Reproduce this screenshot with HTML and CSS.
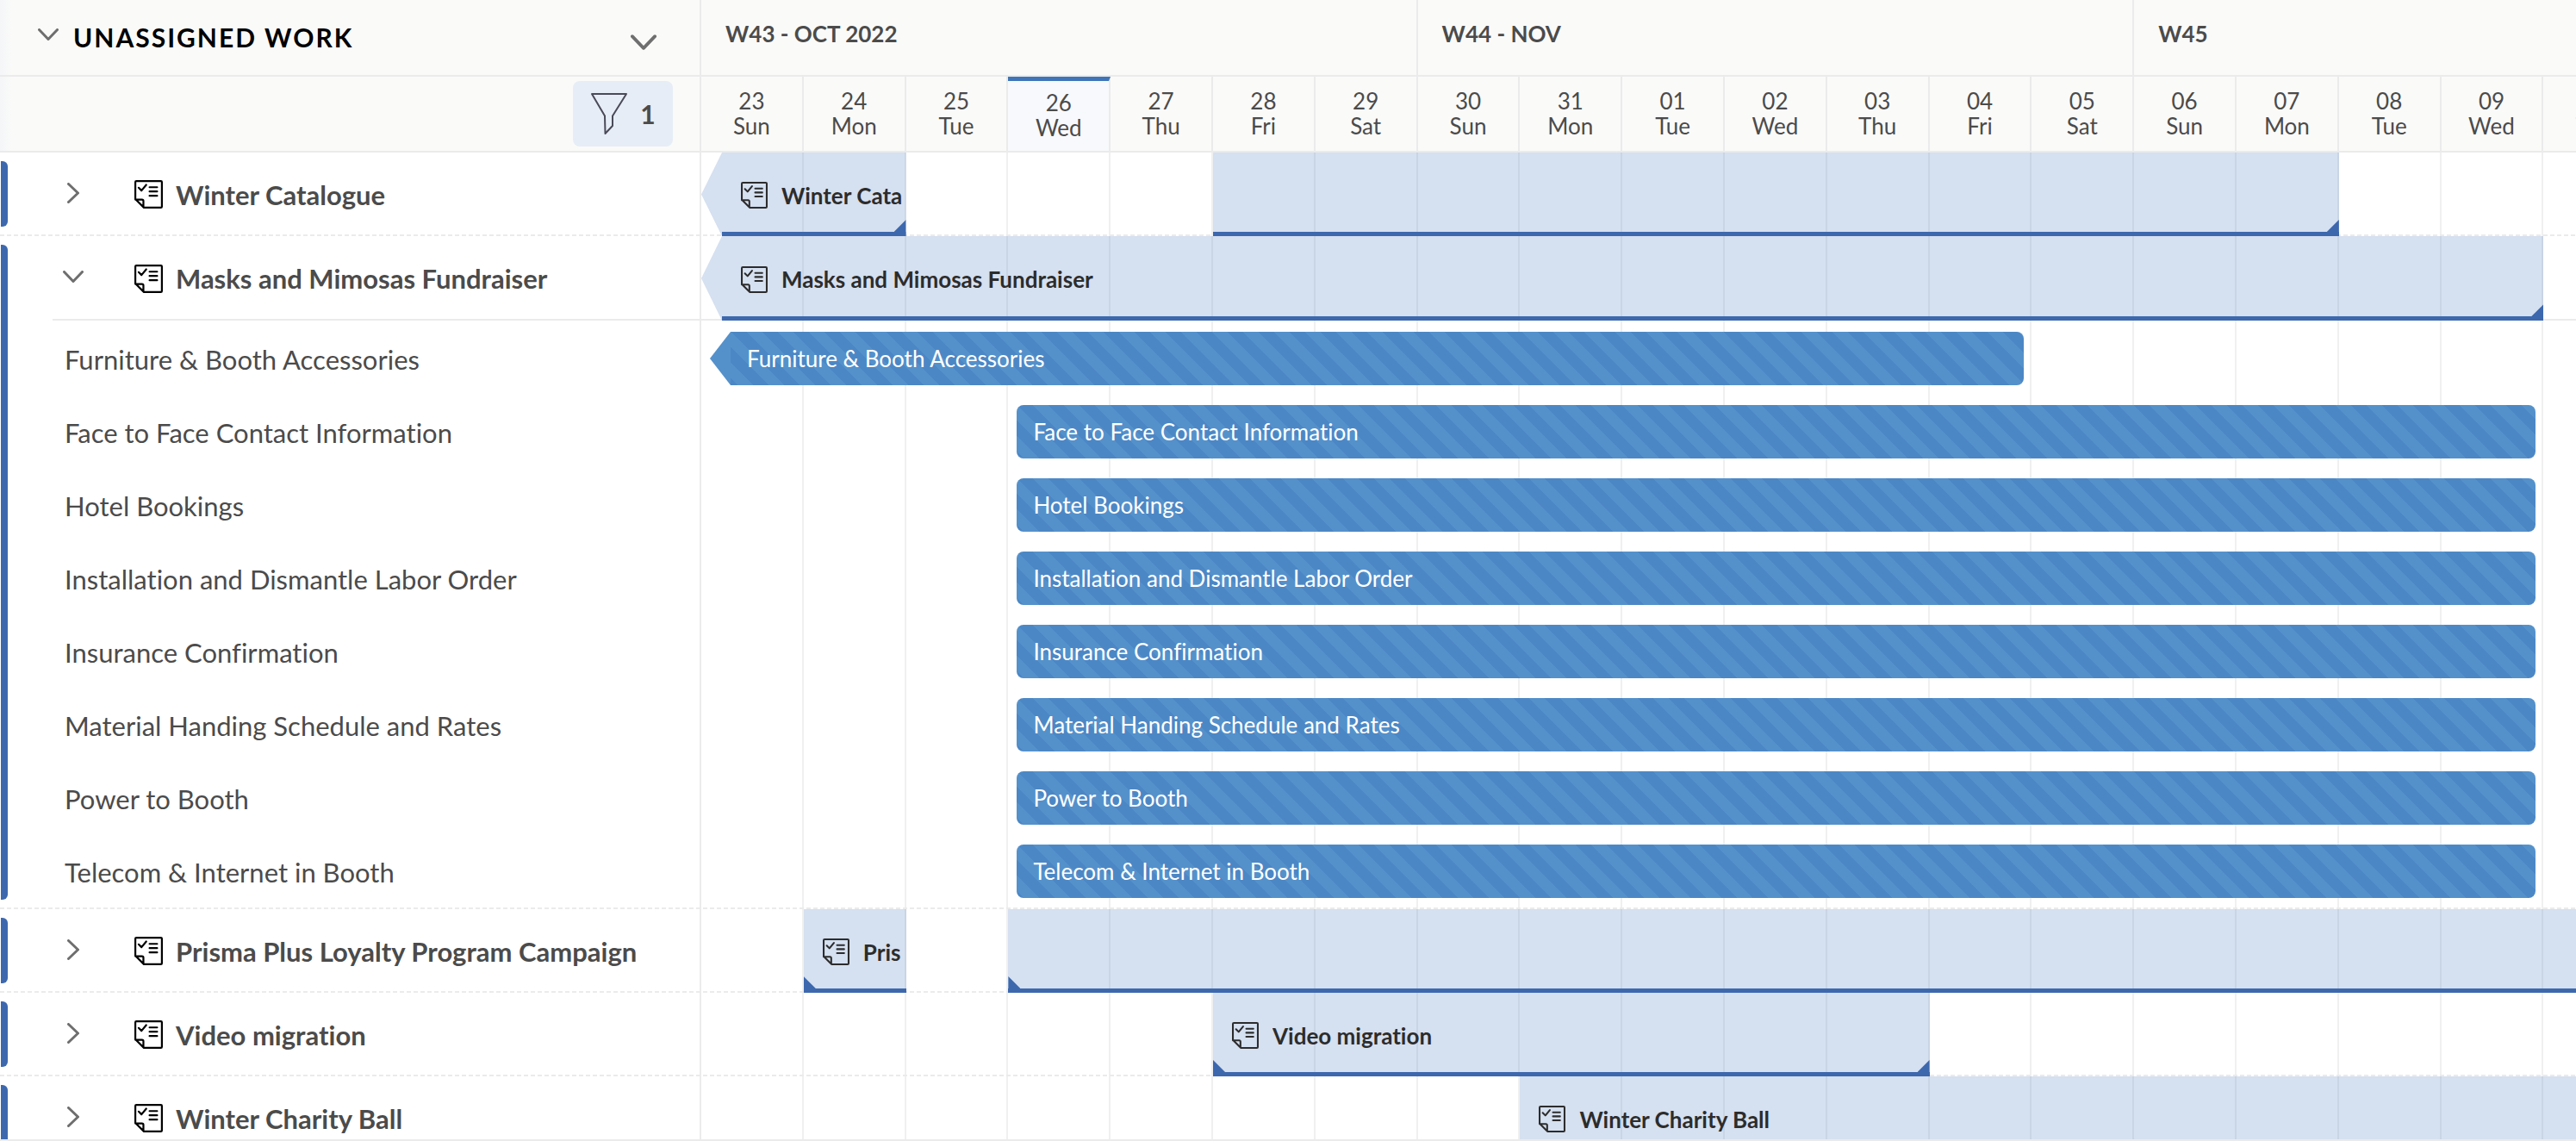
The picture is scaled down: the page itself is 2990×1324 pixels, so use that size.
FILE: index.html
```html
<!DOCTYPE html>
<html lang="en">
<head>
<meta charset="utf-8">
<title>Unassigned work</title>
<link rel="stylesheet" href="styles.css">
</head>
<body>
<svg class="sprite" aria-hidden="true">
  <symbol id="project" viewBox="0 0 30 30">
    <path d="M2 1H28a1 1 0 0 1 1 1V28a1 1 0 0 1-1 1H10L1 20V2a1 1 0 0 1 1-1ZM1 20.500H8a1.500 1.500 0 0 1 1.500 1.500V28.500M4.500 8l3 3 5-6M16 7.500h8M16 12h8M16 16.500h8"/>
  </symbol>
  <symbol id="down" viewBox="0 0 24 14"><path d="M1.500 1.500L12 12.500L22.500 1.500"/></symbol>
  <symbol id="right" viewBox="0 0 14 24"><path d="M1.500 1.500L12.500 12L1.500 22.500"/></symbol>
  <symbol id="funnel" viewBox="0 0 44 50"><path d="M2 2H42L26 27.500V39L17.500 48L17 27.500Z"/></symbol>
</svg>

<main class="board">
  <header class="line head">
    <div class="side title">
      <button class="toggle" aria-label="Collapse unassigned work"><svg class="down"><use href="#down"/></svg></button>
      <h1>UNASSIGNED WORK</h1>
      <button class="more" aria-label="More"><svg class="down big"><use href="#down"/></svg></button>
    </div>
    <div class="track weeks">
      <div class="week">W43 - OCT 2022</div>
      <div class="week">W44 - NOV</div>
      <div class="week last">W45</div>
    </div>
  </header>
  <div class="line head">
    <div class="side tools">
      <button class="filter" aria-label="Filters, 1 applied"><svg><use href="#funnel"/></svg>1</button>
    </div>
    <div class="track days">
      <div class="day">23<br>Sun</div><div class="day">24<br>Mon</div><div class="day">25<br>Tue</div>
      <div class="day today">26<br>Wed</div><div class="day">27<br>Thu</div><div class="day">28<br>Fri</div>
      <div class="day">29<br>Sat</div><div class="day">30<br>Sun</div><div class="day">31<br>Mon</div>
      <div class="day">01<br>Tue</div><div class="day">02<br>Wed</div><div class="day">03<br>Thu</div>
      <div class="day">04<br>Fri</div><div class="day">05<br>Sat</div><div class="day">06<br>Sun</div>
      <div class="day">07<br>Mon</div><div class="day">08<br>Tue</div><div class="day">09<br>Wed</div>
      <div class="day cut"><span>10<br>Thu</span></div>
    </div>
  </div>

  <div class="body">
    <div class="line columns" aria-hidden="true">
      <div class="side"></div>
      <div class="track">
        <i></i><i></i><i></i><i></i><i></i><i></i><i></i><i></i><i></i><i></i><i></i><i></i><i></i><i></i><i></i><i></i><i></i><i></i>
      </div>
    </div>

    <section class="group">
      <div class="line project">
        <div class="side">
          <button class="toggle" aria-label="Expand"><svg class="right"><use href="#right"/></svg></button>
          <svg class="icon"><use href="#project"/></svg><h2>Winter Catalogue</h2>
        </div>
        <div class="track">
          <div class="span before ends" style="grid-column:1/3"><svg class="icon"><use href="#project"/></svg><b>Winter Catalogue</b></div>
          <div class="span ends" style="grid-column:6/17"></div>
        </div>
      </div>
    </section>

    <section class="group">
      <div class="line project open">
        <div class="side">
          <button class="toggle" aria-label="Collapse"><svg class="down"><use href="#down"/></svg></button>
          <svg class="icon"><use href="#project"/></svg><h2>Masks and Mimosas Fundraiser</h2>
        </div>
        <div class="track">
          <div class="span before ends" style="grid-column:1/19"><svg class="icon"><use href="#project"/></svg><b>Masks and Mimosas Fundraiser</b></div>
        </div>
      </div>
      <div class="tasks">
        <div class="line task"><div class="side">Furniture &amp; Booth Accessories</div><div class="track"><div class="bar before" style="grid-column:1/14">Furniture &amp; Booth Accessories</div></div></div>
        <div class="line task"><div class="side">Face to Face Contact Information</div><div class="track"><div class="bar" style="grid-column:4/19">Face to Face Contact Information</div></div></div>
        <div class="line task"><div class="side">Hotel Bookings</div><div class="track"><div class="bar" style="grid-column:4/19">Hotel Bookings</div></div></div>
        <div class="line task"><div class="side">Installation and Dismantle Labor Order</div><div class="track"><div class="bar" style="grid-column:4/19">Installation and Dismantle Labor Order</div></div></div>
        <div class="line task"><div class="side">Insurance Confirmation</div><div class="track"><div class="bar" style="grid-column:4/19">Insurance Confirmation</div></div></div>
        <div class="line task"><div class="side">Material Handing Schedule and Rates</div><div class="track"><div class="bar" style="grid-column:4/19">Material Handing Schedule and Rates</div></div></div>
        <div class="line task"><div class="side">Power to Booth</div><div class="track"><div class="bar" style="grid-column:4/19">Power to Booth</div></div></div>
        <div class="line task"><div class="side">Telecom &amp; Internet in Booth</div><div class="track"><div class="bar" style="grid-column:4/19">Telecom &amp; Internet in Booth</div></div></div>
      </div>
    </section>

    <section class="group">
      <div class="line project">
        <div class="side">
          <button class="toggle" aria-label="Expand"><svg class="right"><use href="#right"/></svg></button>
          <svg class="icon"><use href="#project"/></svg><h2>Prisma Plus Loyalty Program Campaign</h2>
        </div>
        <div class="track">
          <div class="span starts" style="grid-column:2/3"><svg class="icon"><use href="#project"/></svg><b>Prisma Plus Loyalty Program Campaign</b></div>
          <div class="span starts" style="grid-column:4/20"></div>
        </div>
      </div>
    </section>

    <section class="group">
      <div class="line project">
        <div class="side">
          <button class="toggle" aria-label="Expand"><svg class="right"><use href="#right"/></svg></button>
          <svg class="icon"><use href="#project"/></svg><h2>Video migration</h2>
        </div>
        <div class="track">
          <div class="span starts ends" style="grid-column:6/13"><svg class="icon"><use href="#project"/></svg><b>Video migration</b></div>
        </div>
      </div>
    </section>

    <section class="group">
      <div class="line project">
        <div class="side">
          <button class="toggle" aria-label="Expand"><svg class="right"><use href="#right"/></svg></button>
          <svg class="icon"><use href="#project"/></svg><h2>Winter Charity Ball</h2>
        </div>
        <div class="track">
          <div class="span starts" style="grid-column:9/20"><svg class="icon"><use href="#project"/></svg><b>Winter Charity Ball</b></div>
        </div>
      </div>
    </section>
  </div>
</main>
</body>
</html>
```
FILE: styles.css
```css
:root {
  --rule: #ebebeb;
  --text: #4b4b4b;
  --accent: #3d68ae;
  --light: #5491cb;
  --dark: #4c87c5;
}

* { box-sizing: border-box; }

body {
  margin: 0;
  background: #fff;
  color: var(--text);
  font-family: Lato, "Open Sans", sans-serif;
  font-size: 26px;
  font-variant-ligatures: none;
}

h1, h2 { margin: 0; font-weight: 700; }

button {
  display: flex;
  align-items: center;
  justify-content: center;
  padding: 0;
  border: 0;
  background: none;
  color: inherit;
  font: inherit;
  cursor: pointer;
}

svg {
  display: block;
  flex: none;
  fill: none;
  stroke: currentColor;
  stroke-width: 3;
  stroke-linecap: round;
  stroke-linejoin: round;
}
.sprite { position: absolute; width: 0; height: 0; }
.down { width: 24px; height: 14px; color: #6e6e6e; }
.down.big { width: 30px; height: 18px; }
.right { width: 14px; height: 24px; color: #6e6e6e; }
.icon { width: 33px; height: 33px; color: #000; stroke-width: 2; }

.board {
  display: flex;
  flex-direction: column;
  height: 100vh;
  overflow: hidden;
  border-bottom: 2px solid var(--rule);
}

.line { display: grid; grid-template-columns: 814px minmax(0, 1fr); }
.side { display: flex; align-items: center; border-right: 2px solid var(--rule); }

.track {
  display: grid;
  grid-template-columns: repeat(18, minmax(0, 60fr)) minmax(0, 19fr);
  overflow: hidden;
}

/* Header */
.head { flex: none; background: #fafaf9; border-bottom: 2px solid var(--rule); }
.head .side { background: linear-gradient(90deg, #f4f6f8, #fafaf9 14px); }
.title { height: 87px; padding: 0 50px 2px 44px; }
.title .toggle { margin-bottom: 6px; }
.title h1 { margin-left: 17px; color: #000; font-size: 30px; letter-spacing: 2px; }
.title .more { margin: 12px 0 0 auto; }
.week {
  grid-column: span 7;
  padding: 22px 28px;
  border-right: 2px solid var(--rule);
  font-weight: 700;
  line-height: 34px;
}
.week.last { grid-column: span 5; border: 0; }

.tools { justify-content: flex-end; padding-right: 31px; }
.filter {
  width: 116px;
  height: 76px;
  gap: 14px;
  border-radius: 8px;
  background: #e6edf6;
  font-size: 30px;
  font-weight: 700;
}
.filter svg { width: 44px; height: 50px; color: #4a4a58; stroke-width: 2; }

.day {
  height: 86px;
  padding-top: 14px;
  border-right: 2px solid var(--rule);
  line-height: 29px;
  text-align: center;
}
.day.today { padding-top: 11px; border-top: 5px solid #3f75b8; background: #f8f9fc; }
.day.cut { border: 0; }
.day.cut span { display: block; width: 316%; }

/* Body */
.body { position: relative; flex: 1; min-height: 0; }
.columns { position: absolute; inset: 0; }
.columns i { border-right: 2px solid #f0f0f0; }
.body .side { border-color: transparent; }
.columns .side { border-color: var(--rule); }

.group { position: relative; }
.group::before {
  content: "";
  position: absolute;
  inset: 10px auto 11px 1px;
  width: 8px;
  border-radius: 0 6px 6px 0;
  background: var(--accent);
}

.project { height: 97px; }
.project,
.tasks {
  background: repeating-linear-gradient(90deg, var(--rule) 0 5px, transparent 5px 8px) 0 100% / 100% 2px no-repeat;
}
.project.open {
  height: 98px;
  background: linear-gradient(var(--rule), var(--rule)) 61px 100% / 100% 2px no-repeat;
}
.project .side { padding-left: 60px; }
.project .toggle { width: 50px; height: 40px; margin: 0 46px 4px 0; }
.project h2 { margin-left: 15px; font-size: 31px; }

.span {
  --inset: 0px;
  position: relative;
  grid-row: 1;
  display: flex;
  align-items: center;
  gap: 16px;
  padding: 2px 0 0 22px;
  overflow: hidden;
  background:
    linear-gradient(var(--accent), var(--accent)) var(--inset) 100% / 100% 5px no-repeat,
    rgba(45, 100, 180, 0.2);
  color: #2c2c2c;
}
/* Names that do not fit are cut after the last whole letter */
.span b {
  height: 34px;
  overflow: hidden;
  line-height: 34px;
  word-break: break-all;
}
.span .icon { width: 31px; height: 31px; color: inherit; }
.span.before {
  --inset: 24px;
  padding-left: 46px;
  clip-path: polygon(24px 0, 100% 0, 100% 100%, 24px 100%, 0 50%);
}
.span.starts::before,
.span.ends::after {
  content: "";
  position: absolute;
  bottom: 5px;
  width: 14px;
  height: 14px;
  background: var(--accent);
}
.span.starts::before { left: 0; clip-path: polygon(0 0, 100% 100%, 0 100%); }
.span.ends::after { right: 0; clip-path: polygon(100% 0, 100% 100%, 0 100%); }

.tasks { padding: 2px 0 1px; }
.task { height: 85px; }
.task .side { padding-left: 75px; font-size: 31px; }
.bar {
  display: flex;
  align-items: center;
  height: 62px;
  margin: 11px 9px 12px 10px;
  padding-left: 19px;
  border-radius: 8px;
  background: linear-gradient(45deg, var(--dark) 25%, var(--light) 25% 50%, var(--dark) 50% 75%, var(--light) 75%) 0 0 / 36px 36px;
  color: #fff;
}
.bar.before {
  padding-left: 43px;
  border-radius: 0 8px 8px 0;
  background:
    linear-gradient(var(--light), var(--light)) 0 0 / 24px 100% no-repeat,
    linear-gradient(45deg, var(--dark) 25%, var(--light) 25% 50%, var(--dark) 50% 75%, var(--light) 75%) 24px 0 / 36px 36px;
  clip-path: polygon(24px 0, 100% 0, 100% 100%, 24px 100%, 0 50%);
}
```
